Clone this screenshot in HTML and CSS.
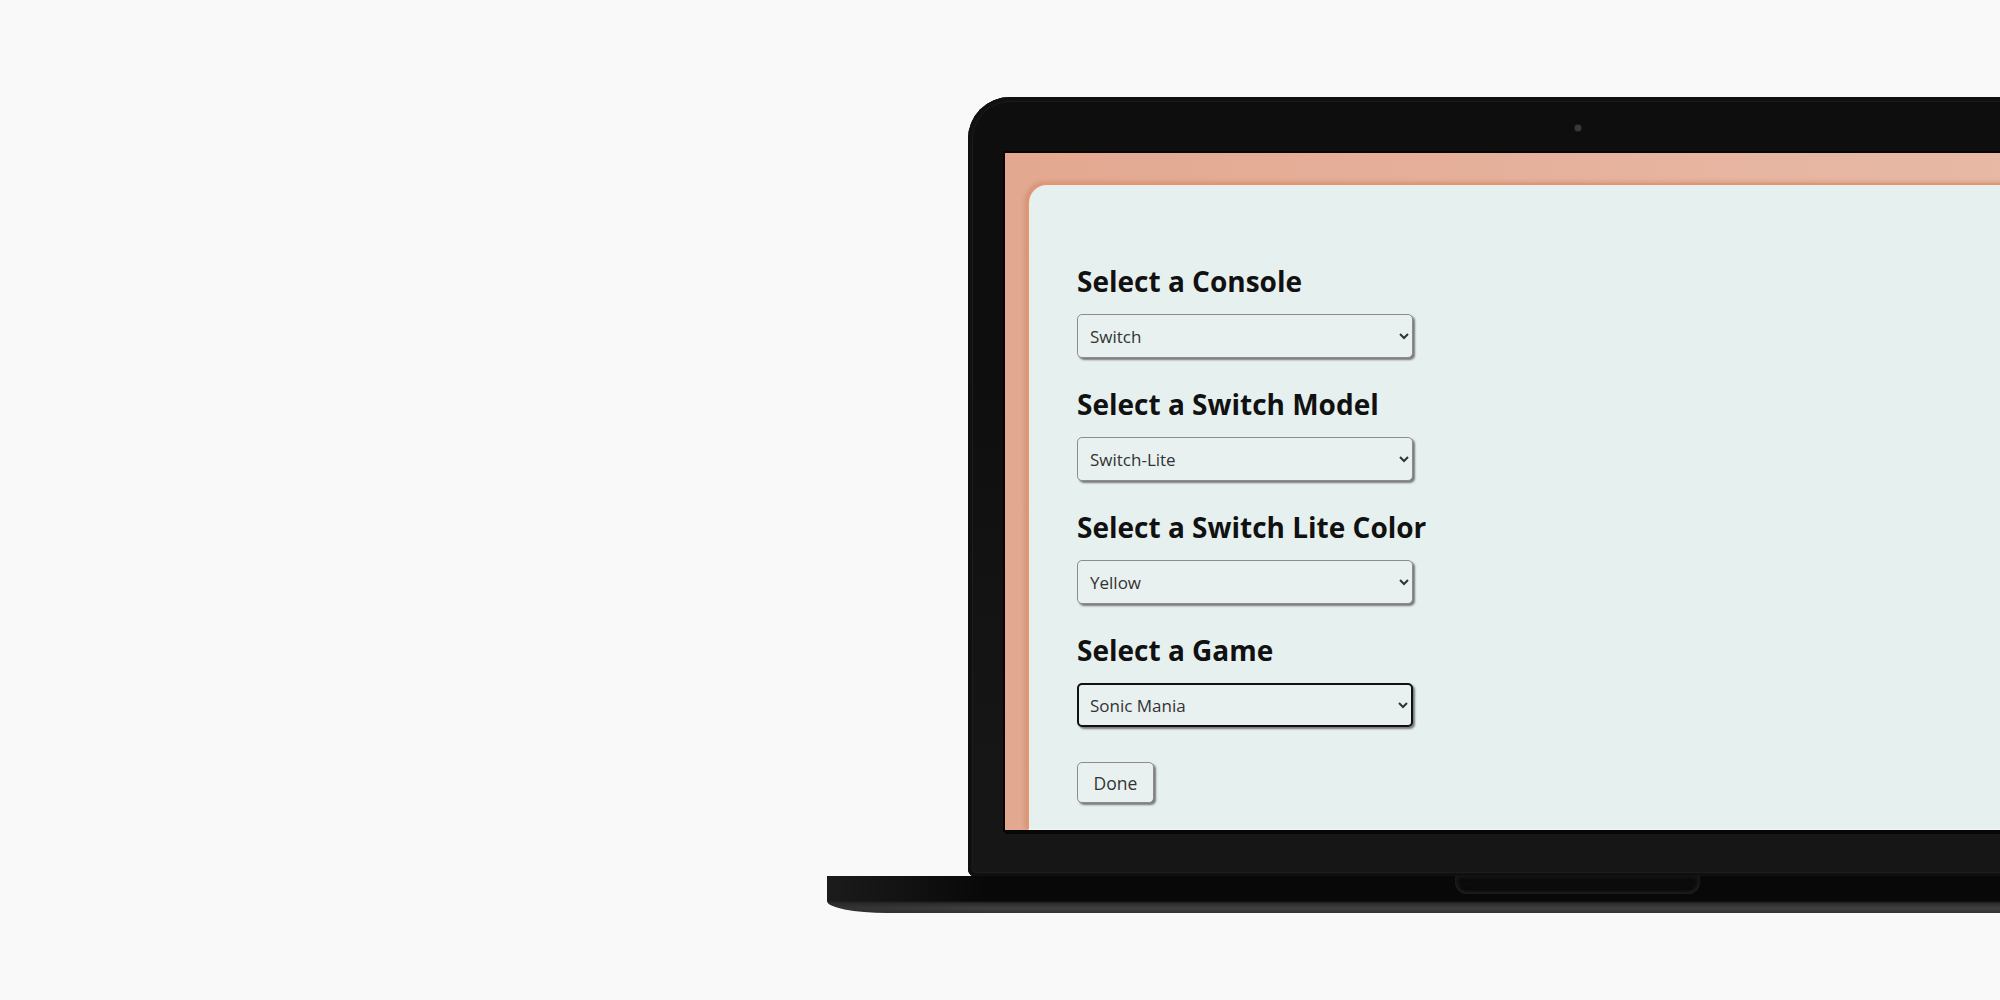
FILE: index.html
```html
<!DOCTYPE html>
<html lang="en">
<head>
    <meta charset="UTF-8" />
    <meta name="viewport" content="width=device-width, initial-scale=1.0"/>
    <title>Console Picker</title>
    <link rel="stylesheet" href="styles.css">
</head>
<body>
<div class="scene">
    <div class="lid">
        <div class="bezel-top"><span class="camera"></span></div>
        <div class="screen">
            <form class="card" id="picker-form">
                <h2>Select a Console</h2>
                <select name="console">
                    <option>Switch</option>
                    <option>PlayStation 5</option>
                    <option>Xbox Series X</option>
                </select>

                <h2>Select a Switch Model</h2>
                <select name="model">
                    <option>Switch-Lite</option>
                    <option>Switch-OLED</option>
                </select>

                <h2>Select a Switch Lite Color</h2>
                <select name="color">
                    <option>Yellow</option>
                    <option>Coral</option>
                    <option>Turquoise</option>
                </select>

                <h2>Select a Game</h2>
                <select name="game" class="focused">
                    <option>Sonic Mania</option>
                    <option>Mario Kart 8</option>
                </select>

                <button type="submit">Done</button>
            </form>
        </div>
        <div class="chin"></div>
    </div>
    <div class="base">
        <div class="notch"></div>
    </div>
</div>
</body>
</html>
```

FILE: styles.css
```css
html, body {
    margin: 0;
    overflow: hidden;
}
body {
    background: #f9f9f9;
    font-family: "Open Sans", "Noto Sans", sans-serif;
    width: 2000px;
    height: 1000px;
}
.scene {
    padding-top: 97px;
}
.lid {
    margin-left: 968px;
    width: 1220px;
    height: 780px;
    box-sizing: border-box;
    padding: 0 37px;
    display: flex;
    flex-direction: column;
    background: linear-gradient(#0e0e0e 0%, #0e0e0e 35%, #161616 85%);
    border-radius: 42px 42px 8px 8px;
    box-shadow: inset 0 0 0 4px #101010, inset 0 0 0 5px #1c1c1c;
}
.bezel-top {
    height: 56px;
    flex-shrink: 0;
    display: flex;
    justify-content: center;
    box-sizing: border-box;
    padding-top: 28px;
}
.camera {
    width: 6px;
    height: 6px;
    border-radius: 50%;
    background: #3a3a3a;
    box-shadow: 0 0 0 1px #222;
}
.screen {
    height: 677px;
    flex-shrink: 0;
    box-sizing: border-box;
    padding: 30px 0 0 22px;
    background: linear-gradient(90deg, #e3a890 0%, #e6b29d 50%, #e7bca9 100%);
    box-shadow: 0 0 0 2px #060606;
    display: flex;
}
.chin {
    flex: 1;
    border-top: 4px solid #070707;
}
.card {
    flex: 1;
    box-sizing: border-box;
    margin: 0;
    padding: 77px 0 0 48px;
    background: #e6f0ee;
    border-top: 2px solid #e8946c;
    border-left: 2px solid #e8946c;
    border-bottom: 1px solid #f2f7f6;
    border-top-left-radius: 20px;
    box-shadow: -2px -1px 4px rgba(150,80,50,0.25);
    display: flex;
    flex-direction: column;
    align-items: flex-start;
}
h2 {
    margin: 0 0 14px 0;
    font-size: 28px;
    line-height: 38px;
    font-weight: 700;
    color: #111;
}
select, button {
    font-family: "Open Sans", "Noto Sans", sans-serif;
    font-size: 17px;
    color: #333;
    background-color: #e8f1ef;
    border: 1px solid #8c8c8c;
    border-radius: 5px;
    box-shadow: 2px 2px 2px #7a7a7a;
}
select {
    width: 336px;
    height: 44px;
    padding: 0 6px 0 8px;
    margin-bottom: 27px;
}
select.focused {
    border: 2px solid #111;
    padding-left: 7px;
}
button {
    margin-top: 8px;
    height: 41px;
    width: 77px;
    padding: 0;
    font-size: 17.5px;
    cursor: pointer;
}
.base {
    margin-top: -1px;
    margin-left: 827px;
    width: 1502px;
    height: 37px;
    background:
        linear-gradient(90deg, rgba(40,40,40,0.6) 0px, rgba(8,8,8,0) 160px),
        linear-gradient(#080808 0px, #080808 25px, #2a2a2a 27px, #404040 32px, #333 37px);
    border-radius: 0 0 60px 60px / 0 0 12px 12px;
    display: flex;
    padding-left: 628px;
    box-sizing: border-box;
}
.notch {
    width: 245px;
    height: 18px;
    background: #0b0b0b;
    border-radius: 0 0 12px 12px;
    box-shadow: inset 0 -2px 3px #1e1e1e, inset 3px 0 4px #1a1a1a, inset -3px 0 4px #1a1a1a;
}
```
